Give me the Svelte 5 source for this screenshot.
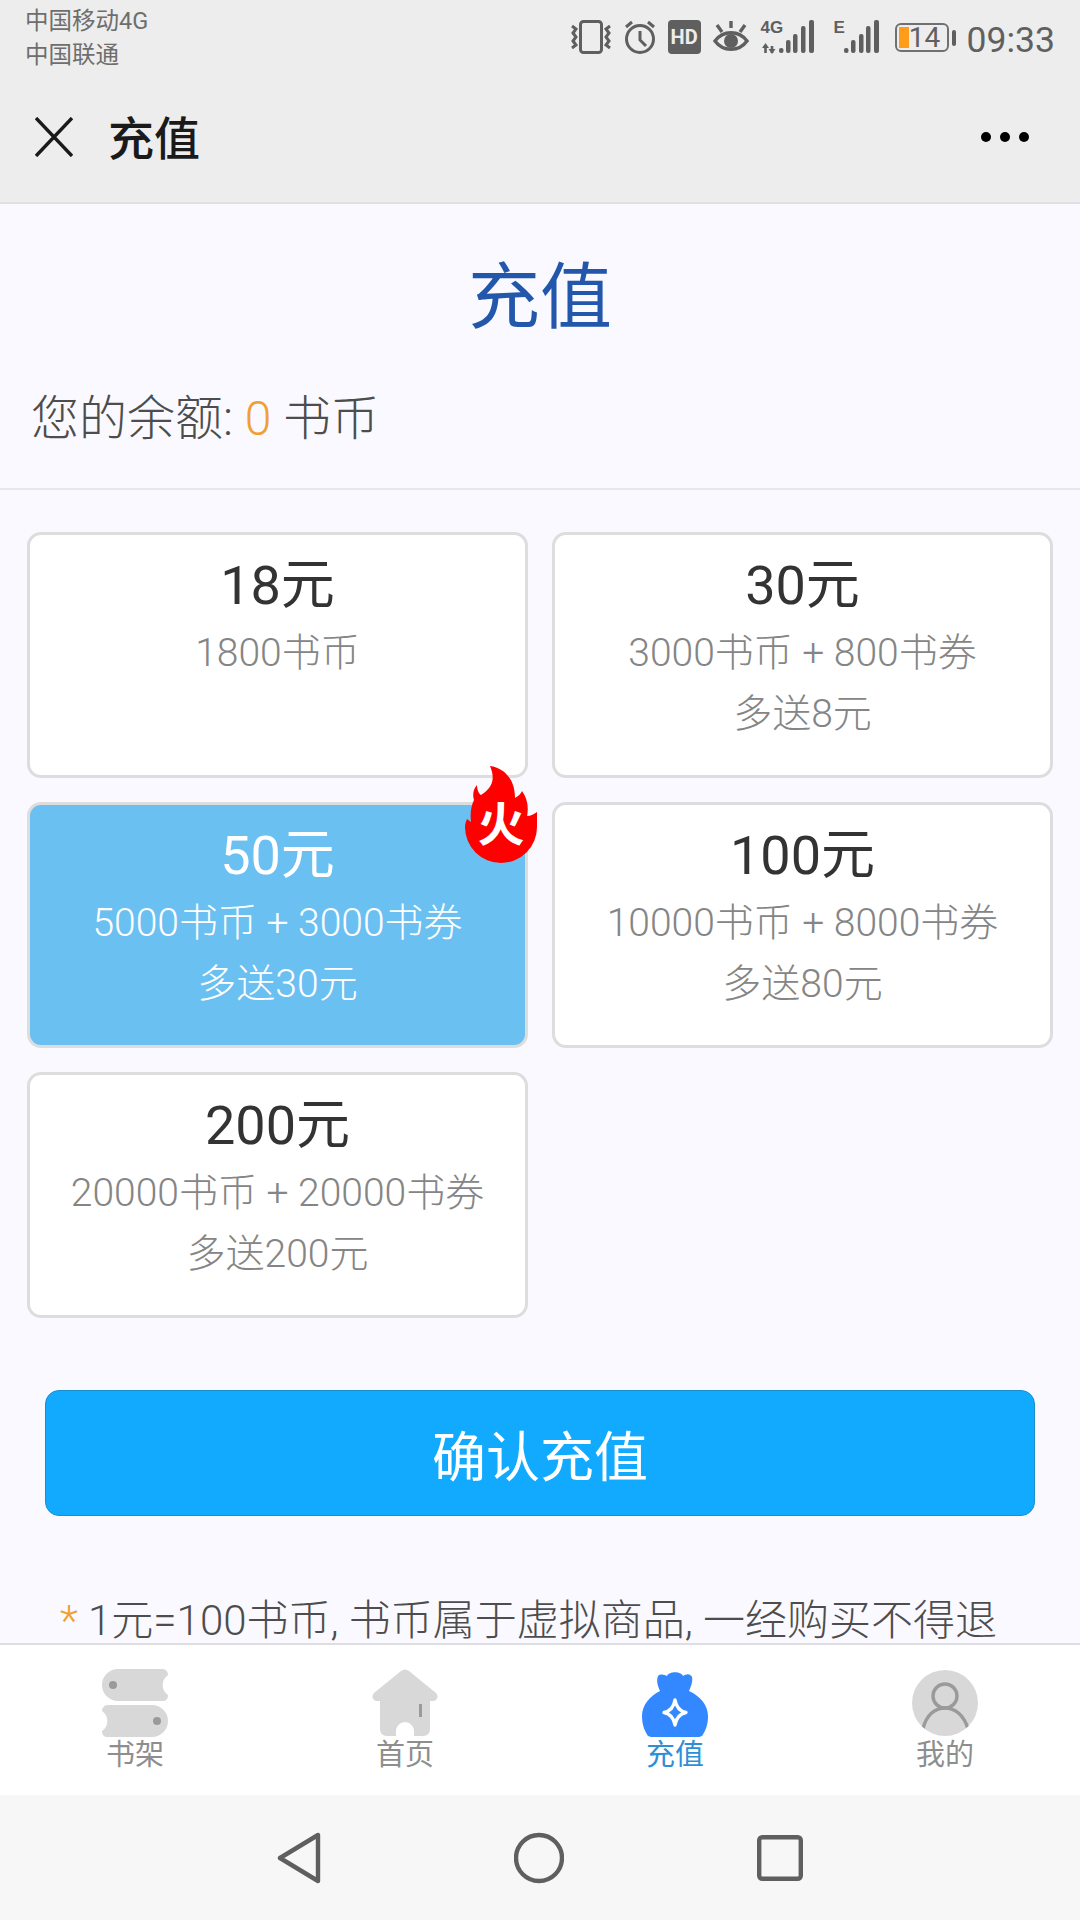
<script>
  const plans = [
    { price: '18元', coins: '1800书币' },
    { price: '30元', coins: '3000书币 + 800书券', bonus: '多送8元' },
    { price: '50元', coins: '5000书币 + 3000书券', bonus: '多送30元', active: true },
    { price: '100元', coins: '10000书币 + 8000书券', bonus: '多送80元' },
    { price: '200元', coins: '20000书币 + 20000书券', bonus: '多送200元' }
  ];
  const tabs = ['shelf', 'home', 'topup', 'mine'];
  const tabNames = { shelf: '书架', home: '首页', topup: '充值', mine: '我的' };
</script>

<div class="screen">
  <header class="top">
    <div class="status">
      <div class="carriers">
        <div>中国移动4G</div>
        <div>中国联通</div>
      </div>
      <div class="status-icons">
        <svg width="42" height="34" viewBox="0 0 42 34" fill="none" stroke="#5f5f5f">
          <rect x="10.500" y="1.500" width="21" height="31" rx="3" stroke-width="3" />
          <path d="M2 6l4 3-3 4 3 4-3 4 3 4-4 3M40 6l-4 3 3 4-3 4 3 4-3 4 4 3" stroke-width="3" />
        </svg>
        <svg width="32" height="34" viewBox="0 0 32 34" fill="none" stroke="#5f5f5f" stroke-width="3">
          <circle cx="16" cy="19" r="13.500" />
          <path d="M16 11v9l6 6M2 7l6-5M30 7l-6-5" />
        </svg>
        <span class="hd">HD</span>
        <svg width="36" height="34" viewBox="0 0 36 34" fill="none" stroke="#5f5f5f" stroke-width="3.400">
          <path d="M2 21c8-11 24-11 32 0-8 11-24 11-32 0z" />
          <circle cx="18" cy="21" r="7" fill="#5f5f5f" stroke="none" />
          <path d="M18 1v7M4 5l5 7M32 5l-5 7" />
        </svg>
        <div class="signal">
          <span class="net">4G</span>
          <svg width="53" height="34" viewBox="0 0 53 34">
            <path d="M4.500 33v-7M11 33v-7" stroke="#5f5f5f" stroke-width="2.600" fill="none" />
            <path d="M4.500 23l-3.500 5h7zM11 34l-3.500-5h7z" fill="#5f5f5f" />
            <g fill="#5f5f5f">
              <rect x="18" y="28" width="4.500" height="5" rx="2" />
              <rect x="25" y="20" width="4.500" height="13" rx="2" />
              <rect x="32" y="14" width="4.500" height="19" rx="2" />
              <rect x="40" y="6" width="4.500" height="27" rx="2" />
              <rect x="48" y="0" width="5" height="33" rx="2" />
            </g>
          </svg>
        </div>
        <div class="signal gap-wide">
          <span class="net">E</span>
          <svg width="45" height="34" viewBox="0 0 45 34">
            <g fill="#5f5f5f">
              <rect x="10" y="28" width="4.500" height="5" rx="2" />
              <rect x="17" y="20" width="4.500" height="13" rx="2" />
              <rect x="25" y="14" width="4.500" height="19" rx="2" />
              <rect x="32" y="6" width="4.500" height="27" rx="2" />
              <rect x="40" y="0" width="5" height="33" rx="2" />
            </g>
          </svg>
        </div>
        <div class="battery">
          <span class="level"></span>
          <span class="pct">14</span>
        </div>
        <span class="clock">09:33</span>
      </div>
    </div>
    <div class="toolbar">
      <svg width="38" height="40" viewBox="0 0 38 40" stroke="#1a1a1a" stroke-width="3.400" fill="none">
        <path d="M1 1l36 38M37 1L1 39" />
      </svg>
      <span class="toolbar-title">充值</span>
      <div class="dots"><i></i><i></i><i></i></div>
    </div>
  </header>

  <main class="page">
    <h1>充值</h1>
    <p class="balance">您的余额: <em>0</em> 书币</p>
    <div class="plans">
      {#each plans as plan}
        <div class="plan" class:active={plan.active}>
          <div class="price">{plan.price}</div>
          <div class="coins">{plan.coins}</div>
          {#if plan.bonus}<div class="coins">{plan.bonus}</div>{/if}
          {#if plan.active}
            <div class="hot">
              <svg width="72" height="97" viewBox="0 0 72 97">
                <path fill="#f00" d="M25 0C40 2 50 14 50 32C53 30 56 28 57 25C62 32 64 40 62 50C66 50 69 48 72 46C72 52 72 57 72 61A36 36 0 0 1 0 61C0 58 1 55 2 53L6 56C5 48 6 40 9 34C7 28 9 22 12 19C12 24 14 28 16 29C24 24 32 16 25 0Z" />
              </svg>
              <span>火</span>
            </div>
          {/if}
        </div>
      {/each}
    </div>
    <button class="confirm">确认充值</button>
    <p class="note"><em>*</em> 1元=100书币, 书币属于虚拟商品, 一经购买不得退</p>
  </main>

  <nav class="tabs">
    {#each tabs as tab}
      <div class="tab" class:current={tab === 'topup'}>
        {#if tab === 'shelf'}
          <svg width="66" height="68" viewBox="0 0 66 68">
            <path fill="#d8d8d8" d="M16 0H60C64 0 66 3 66 6A12 12 0 0 0 66 26C66 30 64 32 60 32H16A16 16 0 0 1 16 0Z" />
            <path fill="#d8d8d8" d="M50 36H6C2 36 0 39 0 42A12 12 0 0 1 0 62C0 66 2 68 6 68H50A16 16 0 0 0 50 36Z" />
            <circle cx="11" cy="16" r="4" fill="#9a9a9a" />
            <circle cx="55" cy="52" r="4" fill="#9a9a9a" />
          </svg>
        {:else if tab === 'home'}
          <svg width="66" height="68" viewBox="0 0 66 68">
            <path fill="#d8d8d8" d="M29 2Q33-1 37 2L64 24Q68 29 62 32H58V60Q58 67 51 67H15Q8 67 8 60V32H4Q-2 29 2 24Z" />
            <path fill="#fff" d="M24 67V62A9 9 0 0 1 42 62V67Z" />
            <rect x="47" y="35" width="3" height="13" fill="#9a9a9a" />
          </svg>
        {:else if tab === 'topup'}
          <svg width="66" height="68" viewBox="0 0 66 68">
            <path fill="#3388ff" d="M18 22C16 17 14 12 16 7C19 4 23 6 25 7C27 2 39 2 41 7C44 5 48 4 50 8C51 13 49 17 47 22C58 27 66 36 66 47C66 55 64 61 60 67C58 68 56 68 54 68H12C10 68 8 68 6 67C2 61 0 55 0 47C0 36 8 27 18 22Z" />
            <path fill="none" stroke="#fff" stroke-width="3.400" stroke-linejoin="round" d="M33 31C34 37 37 42 44 43.500C37 45 34 50 33 56C32 50 29 45 22 43.500C29 42 32 37 33 31Z" />
          </svg>
        {:else}
          <svg width="66" height="68" viewBox="0 0 66 68">
            <defs><clipPath id="avatar"><circle cx="33" cy="34" r="33" /></clipPath></defs>
            <circle cx="33" cy="34" r="33" fill="#d8d8d8" />
            <g fill="none" stroke="#9a9a9a" stroke-width="3.400" clip-path="url(#avatar)">
              <circle cx="33" cy="27" r="12" />
              <path d="M11 60C14 46 23 39 33 39C43 39 52 46 56 60" />
            </g>
          </svg>
        {/if}
        <span>{tabNames[tab]}</span>
      </div>
    {/each}
  </nav>

  <footer class="softkeys">
    <svg width="44" height="52" viewBox="0 0 44 52" fill="none" stroke="#5f5f5f" stroke-width="4.400" stroke-linejoin="round">
      <path d="M41 3V49L3 26Z" />
    </svg>
    <svg width="50" height="52" viewBox="0 0 50 52" fill="none" stroke="#5f5f5f" stroke-width="4.400">
      <circle cx="25" cy="26" r="23" />
    </svg>
    <svg width="46" height="46" viewBox="0 0 46 46" fill="none" stroke="#5f5f5f" stroke-width="4.400">
      <rect x="2.200" y="2.200" width="41.600" height="41.600" rx="3" />
    </svg>
  </footer>
</div>

<style>
  :global(body) {
    font-family: Roboto, "Noto Sans CJK SC", sans-serif;
  }

  .screen {
    display: flex;
    flex-direction: column;
    width: 1080px;
    height: 1920px;
    overflow: hidden;
    background: #faf9ff;
  }

  .top {
    flex: none;
    height: 202px;
    background: #ededed;
    border-bottom: 2px solid #e0e0e2;
  }

  .status {
    display: flex;
    justify-content: space-between;
    height: 68px;
    padding: 4px 25px 0 25px;
  }

  .carriers {
    font-size: 23.500px;
    line-height: 34px;
    color: #6e6e6e;
  }

  .status-icons {
    display: flex;
    align-items: flex-start;
    gap: 12px;
    padding-top: 16px;
  }

  .hd {
    width: 33px;
    height: 34px;
    border-radius: 4px;
    background: #5f5f5f;
    color: #ededed;
    font-size: 20px;
    font-weight: 700;
    line-height: 34px;
    text-align: center;
  }

  .signal {
    position: relative;
    height: 34px;
  }

  /* network type sits on top of the signal icon, in its empty corner */
  .net {
    position: absolute;
    top: -1px;
    left: 0;
    font-family: "Liberation Sans", Roboto, sans-serif;
    font-size: 17px;
    font-weight: 700;
    line-height: 17px;
    color: #5f5f5f;
  }

  .gap-wide {
    margin-left: 8px;
  }

  .battery {
    position: relative;
    width: 54px;
    height: 29px;
    margin: 3px 6px 0 4px;
    border: 2px solid #707070;
    border-radius: 6px;
    box-sizing: border-box;
    color: #606060;
    font-size: 28px;
    line-height: 25px;
    text-align: center;
  }

  .battery::after {
    content: '';
    position: absolute;
    top: 5px;
    right: -9px;
    width: 4px;
    height: 16px;
    border-radius: 2px;
    background: #5f5f5f;
  }

  .level {
    position: absolute;
    top: 2px;
    left: 2px;
    width: 10px;
    height: 21px;
    background: #ff9c1c;
  }

  .pct {
    position: relative;
    margin-left: 6px;
  }

  .clock {
    font-size: 35.500px;
    line-height: 40px;
    color: #606060;
  }

  .toolbar {
    display: flex;
    align-items: center;
    height: 130px;
    padding: 0 35px;
  }

  .toolbar-title {
    margin: 0 0 4px 35px;
    font-size: 46px;
    font-weight: 500;
    color: #1a1a1a;
  }

  .dots {
    display: flex;
    gap: 9px;
    margin-left: auto;
    margin-right: 16px;
  }

  .dots i {
    width: 10px;
    height: 10px;
    border-radius: 50%;
    background: #000;
  }

  .page {
    flex: 1;
    min-height: 0;
  }

  h1 {
    margin: 44px 0 0;
    font-size: 72px;
    font-weight: 400;
    line-height: 100px;
    text-align: center;
    color: #2257ab;
  }

  .balance {
    margin: 41px 0 0;
    padding: 0 31px 39px;
    border-bottom: 2px solid #e8e8ec;
    font-size: 48px;
    font-weight: 300;
    line-height: 60px;
    color: #4d4d4d;
  }

  em {
    font-style: normal;
    color: #f0a030;
  }

  .plans {
    display: grid;
    grid-template-columns: 501px 501px;
    grid-auto-rows: 246px;
    gap: 24px;
    padding: 42px 27px 0;
  }

  .plan {
    position: relative;
    box-sizing: border-box;
    padding-top: 19px;
    border: 3px solid #ddd;
    border-radius: 14px;
    background: #fff;
    text-align: center;
  }

  .price {
    font-size: 54px;
    line-height: 64px;
    margin-bottom: 5px;
    color: #333;
  }

  .coins {
    font-size: 39px;
    font-weight: 300;
    line-height: 61px;
    color: #858585;
  }

  .plan.active {
    background: #6bc0f2;
  }

  .active .price,
  .active .coins {
    color: #fff;
  }

  .hot {
    position: absolute;
    top: -39px;
    right: -12px;
    width: 72px;
    height: 97px;
  }

  .hot span {
    position: absolute;
    left: 0;
    right: 0;
    top: 31px;
    font-size: 47px;
    font-weight: 700;
    line-height: 56px;
    color: #fff;
  }

  .confirm {
    display: block;
    width: 990px;
    height: 126px;
    margin: 72px 0 0 45px;
    border: 1px solid #1b8fcc;
    border-radius: 14px;
    background: #11aaff;
    color: #fff;
    font-family: inherit;
    font-size: 54px;
  }

  .note {
    margin: 82px 0 0;
    padding-left: 60px;
    font-size: 42px;
    font-weight: 300;
    line-height: 46px;
    white-space: nowrap;
    color: #4d4d4d;
  }

  .tabs {
    flex: none;
    display: grid;
    grid-template-columns: repeat(4, 1fr);
    height: 152px;
    box-sizing: border-box;
    padding-top: 24px;
    border-top: 2px solid #dedee2;
    background: #fff;
  }

  .tab {
    display: flex;
    flex-direction: column;
    align-items: center;
    font-size: 29px;
    line-height: 36px;
    color: #8e8e8e;
  }

  .tab.current {
    color: #2f8fd5;
  }

  .softkeys {
    flex: none;
    display: flex;
    align-items: center;
    justify-content: center;
    gap: 193px;
    height: 125px;
    background: #f7f7f7;
  }
</style>
